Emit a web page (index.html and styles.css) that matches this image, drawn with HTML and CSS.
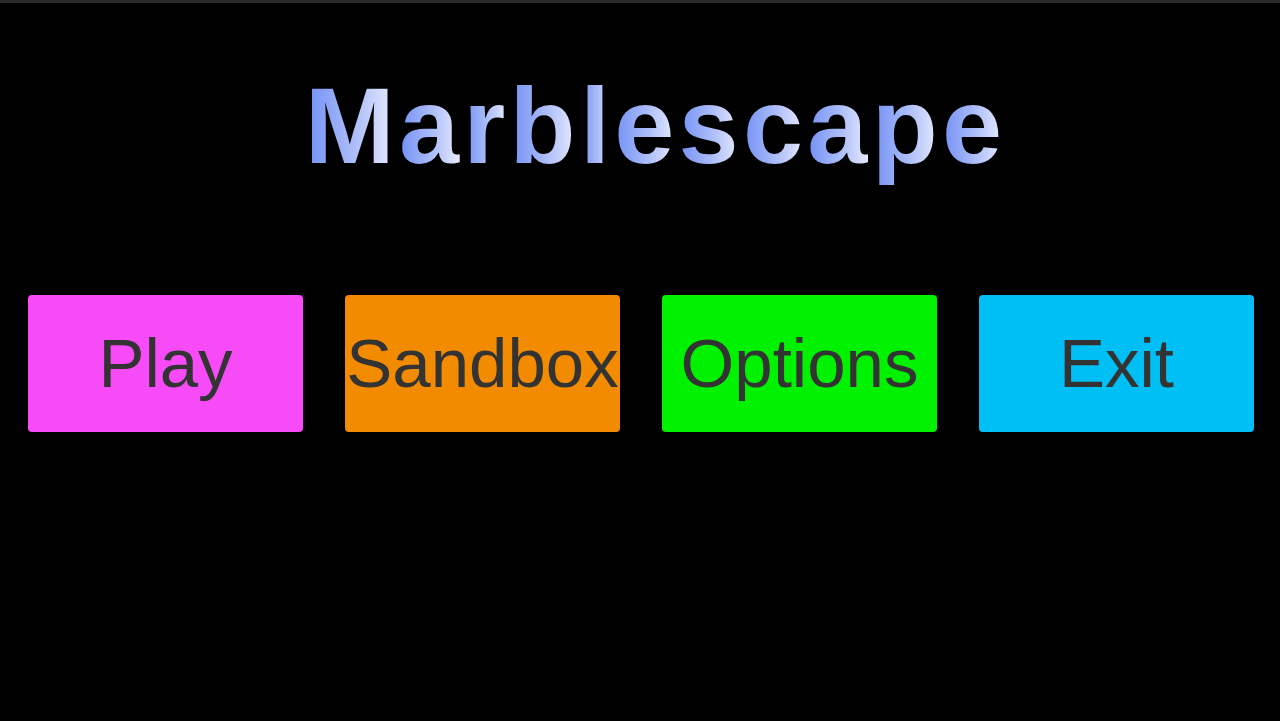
FILE: index.html
```html
<!DOCTYPE html>
<html>
<head>
<meta charset="utf-8">
<link rel="stylesheet" href="styles.css">
</head>
<body>
<div class="topbar"></div>
<h1 class="title"><span>M</span><span>a</span><span>r</span><span>b</span><span>l</span><span>e</span><span>s</span><span>c</span><span>a</span><span>p</span><span>e</span></h1>
<div class="menu">
  <button class="btn play">Play</button>
  <button class="btn sandbox">Sandbox</button>
  <button class="btn options">Options</button>
  <button class="btn exit">Exit</button>
</div>
</body>
</html>
```
FILE: styles.css
```css
html, body {
  margin: 0;
  padding: 0;
  background: #000;
  width: 1280px;
  height: 721px;
  overflow: hidden;
}
.topbar {
  height: 3px;
  background: #2b2b2b;
}
.title {
  margin: 69px 0 0 0;
  padding-left: 31px;
  font-family: "Liberation Sans", Arial, sans-serif;
  font-weight: bold;
  font-size: 108px;
  line-height: 108px;
  letter-spacing: 4.3px;
  text-align: center;
}
.title span {
  background: linear-gradient(90deg, #7290f5 0%, #a9bbf9 50%, #eef1ff 100%);
  -webkit-background-clip: text;
  background-clip: text;
  color: transparent;
}
.menu {
  display: flex;
  gap: 42px;
  padding: 0 26px 0 28px;
  margin-top: 115px;
}
.btn {
  width: 275px;
  height: 137px;
  border: none;
  border-radius: 4px;
  padding: 0;
  display: flex;
  align-items: center;
  justify-content: center;
  font-family: "Liberation Sans", Arial, sans-serif;
  font-size: 69px;
  color: #333;
  white-space: nowrap;
  overflow: visible;
}
.play { background: #f64bf6; }
.sandbox { background: #f28b00; }
.options { background: #00f200; }
.exit { background: #00bff5; }
```
